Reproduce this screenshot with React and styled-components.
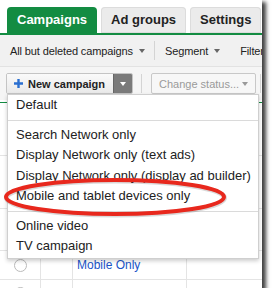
import React from 'react';
import styled, { createGlobalStyle } from 'styled-components';

const GlobalStyle = createGlobalStyle`
  html, body {
    margin: 0;
    padding: 0;
    background: #ffffff;
  }
  body {
    font-family: "Liberation Sans", Arial, sans-serif;
  }
`;

const Frame = styled.div`
  position: relative;
  width: 262px;
  height: 288px;
  overflow: hidden;
  background: #fff;
  box-shadow: 3px 3px 4px 1px rgba(0, 0, 0, 0.75);
`;

const TabBar = styled.div`
  display: flex;
  gap: 4px;
  padding: 7px 0 0 7px;
  border-bottom: 2px solid #138c42;
  white-space: nowrap;
`;

const Tab = styled.div`
  flex: none;
  height: 26px;
  line-height: 26px;
  padding: 0 10px;
  border-radius: 4px 4px 0 0;
  font-size: 13px;
  font-weight: bold;
  color: ${p => (p.active ? '#fff' : '#222')};
  background: ${p => (p.active ? '#138c42' : '#ebebeb')};
  box-shadow: ${p => (p.active ? 'none' : 'inset 0 0 0 1px #dcdcdc')};
`;

const FilterBar = styled.div`
  display: flex;
  align-items: center;
  height: 31px;
  padding-left: 10px;
  background: #f1f1f1;
  border-bottom: 1px solid #e2e2e2;
  font-size: 11px;
  letter-spacing: -0.12px;
  color: #222;
  white-space: nowrap;
`;

const Drop = styled.span`
  flex: none;
  display: inline-flex;
  align-items: center;
  gap: 6px;
  margin-right: ${p => p.gap || 0}px;
`;

const Caret = styled.span`
  flex: none;
  width: 0;
  height: 0;
  border-left: 3.5px solid transparent;
  border-right: 3.5px solid transparent;
  border-top: 4px solid ${p => p.color || '#666'};
`;

const VRule = styled.span`
  flex: none;
  width: 1px;
  height: ${p => p.h || 19}px;
  background: #d4d4d4;
  margin: 0 ${p => p.mr}px 0 ${p => p.ml}px;
`;

const ActionBar = styled.div`
  display: flex;
  align-items: center;
  height: 33px;
  padding-left: 6px;
  background: #f5f5f5;
  white-space: nowrap;
`;

const SplitButton = styled.div`
  flex: none;
  display: flex;
  height: 19px;
  border: 1px solid #c4c4c4;
  border-radius: 2px;
  overflow: hidden;
`;

const NewButton = styled.div`
  flex: none;
  display: flex;
  align-items: center;
  gap: 5px;
  box-sizing: border-box;
  width: 106px;
  padding-left: 7px;
  background: linear-gradient(#fafafa, #e9e9e9);
  font-size: 11px;
  font-weight: bold;
  color: #222;
`;

const ArrowButton = styled.div`
  flex: none;
  display: flex;
  align-items: center;
  justify-content: center;
  box-sizing: border-box;
  width: 19px;
  background: #7a7a7a;
  border-left: 1px solid #666;
`;

const GhostButton = styled.div`
  flex: none;
  display: flex;
  align-items: center;
  justify-content: space-between;
  box-sizing: border-box;
  width: 105px;
  height: 21px;
  padding: 0 7px 0 7px;
  border: 1px solid #c8c8c8;
  border-radius: 2px;
  background: #f7f7f7;
  font-size: 11px;
  color: #9a9a9a;
`;

const Table = styled.div`
  border-top: 1px solid #138c42;
  margin-top: 2px;
`;

const Row = styled.div`
  display: grid;
  grid-template-columns: 41px 32px 114px 1fr;
  height: ${p => p.h}px;
  border-bottom: 1px solid #e4e4e4;
`;

const Cell = styled.div`
  display: flex;
  align-items: ${p => (p.top ? 'flex-start' : 'center')};
  padding-left: ${p => p.pl ?? 4}px;
  padding-top: ${p => (p.top ? 6 : 0)}px;
  border-right: 1px solid #e4e4e4;
  overflow: hidden;
  white-space: nowrap;
  font-size: ${p => p.size || 12}px;
  color: ${p => p.color || '#222'};
  &:last-child {
    border-right: none;
  }
`;

const Toggle = styled.span`
  flex: none;
  width: 11px;
  height: 11px;
  border: 1px solid #bbb;
  border-radius: 50%;
  margin: ${p => (p.top ? '1px' : '0')} 0 0 14px;
`;

const Menu = styled.div`
  position: absolute;
  top: 94px;
  left: 7px;
  width: 250px;
  padding: 0 0 1px;
  background: #fff;
  border: 1px solid #cfcfcf;
  box-shadow: 0 2px 4px rgba(0, 0, 0, 0.2);
`;

const Item = styled.div`
  height: 20.5px;
  line-height: 20.5px;
  padding-left: 8px;
  font-size: 13px;
  color: #222;
  white-space: nowrap;
`;

const Divider = styled.div`
  height: 1px;
  margin: 4px 0;
  background: #dadada;
`;

const Ring = styled.svg`
  position: absolute;
  top: 175px;
  left: 3px;
  overflow: visible;
`;

function Plus() {
  return (
    <svg width="9" height="9" viewBox="0 0 9 9">
      <path d="M3.3 0h2.4v3.3H9v2.4H5.7V9H3.3V5.7H0V3.3h3.3z" fill="#2a6fd0" />
    </svg>
  );
}

export default function App() {
  const menuItems = [
    ['Default'],
    ['Search Network only', 'Display Network only (text ads)', 'Display Network only (display ad builder)', 'Mobile and tablet devices only'],
    ['Online video', 'TV campaign'],
  ];

  return (
    <>
      <GlobalStyle />
      <Frame>
        <TabBar>
          <Tab active>Campaigns</Tab>
          <Tab>Ad groups</Tab>
          <Tab>Settings</Tab>
        </TabBar>

        <FilterBar>
          <Drop>All but deleted campaigns <Caret /></Drop>
          <VRule ml={9} mr={10} />
          <Drop gap={20}>Segment <Caret /></Drop>
          <span>Filter</span>
        </FilterBar>

        <ActionBar>
          <SplitButton>
            <NewButton><Plus />New campaign</NewButton>
            <ArrowButton><Caret color="#fff" /></ArrowButton>
          </SplitButton>
          <VRule ml={8} mr={9} />
          <GhostButton>Change status... <Caret color="#999" /></GhostButton>
          <VRule ml={4} mr={0} />
        </ActionBar>

        <Table>
          <Row h={52}><Cell /><Cell /><Cell /><Cell /></Row>
          <Row h={52}><Cell /><Cell /><Cell /><Cell /></Row>
          <Row h={41}><Cell /><Cell /><Cell /><Cell /></Row>
          <Row h={28}>
            <Cell pl={0}><Toggle /></Cell>
            <Cell />
            <Cell color="#1a55c8">Mobile Only</Cell>
            <Cell />
          </Row>
          <Row h={28}>
            <Cell pl={0} top><Toggle top /></Cell>
            <Cell />
            <Cell color="#1a55c8" top>TG Effect</Cell>
            <Cell size={11} pl={32} top>Eligible</Cell>
          </Row>
        </Table>

        <Menu>
          {menuItems.map((group, gi) => (
            <React.Fragment key={gi}>
              {gi > 0 && <Divider />}
              {group.map(label => <Item key={label}>{label}</Item>)}
            </React.Fragment>
          ))}
        </Menu>

        <Ring width="228" height="44" viewBox="0 0 228 44">
          <ellipse cx="112" cy="22" rx="109" ry="17" fill="none" stroke="rgba(0,0,0,0.15)" strokeWidth="5" transform="translate(0.5 1)" />
          <ellipse cx="112" cy="22" rx="109" ry="17" fill="none" stroke="#e8281d" strokeWidth="4" />
        </Ring>
      </Frame>
    </>
  );
}
